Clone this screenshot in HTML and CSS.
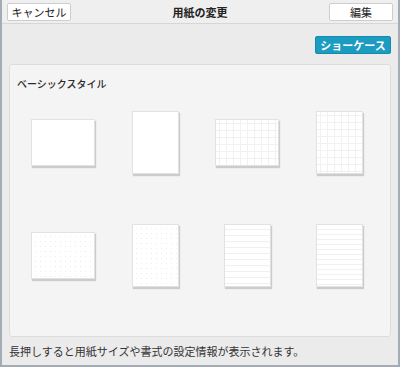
FILE: index.html
```html
<!DOCTYPE html>
<html lang="ja">
<head>
    <meta charset="UTF-8">
    <title>用紙の変更</title>
    <link rel="stylesheet" href="styles.css">
</head>
<body>
    <div class="app">
        <div class="topbar">
            <button class="bar-btn">キャンセル</button>
            <div class="title">用紙の変更</div>
            <button class="bar-btn">編集</button>
        </div>

        <div class="toolbar">
            <button class="showcase-btn">ショーケース</button>
        </div>

        <div class="panel">
            <div class="panel-label">ベーシックスタイル</div>
            <div class="paper-grid">
                <div class="cell"><div class="paper landscape"></div></div>
                <div class="cell"><div class="paper portrait"></div></div>
                <div class="cell"><div class="paper landscape squared"></div></div>
                <div class="cell"><div class="paper portrait squared"></div></div>
                <div class="cell"><div class="paper landscape dotted"></div></div>
                <div class="cell"><div class="paper portrait dotted"></div></div>
                <div class="cell"><div class="paper portrait ruled"></div></div>
                <div class="cell"><div class="paper portrait ruled narrow"></div></div>
            </div>
        </div>

        <div class="hint">長押しすると用紙サイズや書式の設定情報が表示されます。</div>
    </div>
</body>
</html>
```

FILE: styles.css
```css
* {
    margin: 0;
    padding: 0;
    box-sizing: border-box;
}

body {
    font-family: "Noto Sans CJK JP", "Noto Sans", sans-serif;
    background: #ebebeb;
    color: #333;
}

.app {
    width: 400px;
    height: 367px;
    border: 2px solid #a3abb6;
    border-top: none;
    background: #ebebeb;
    display: flex;
    flex-direction: column;
}

.topbar {
    height: 24px;
    flex: none;
    padding: 0 5px;
    border-bottom: 1px solid #d6d6d6;
    background: #efefef;
    display: flex;
    align-items: center;
    justify-content: space-between;
}

.bar-btn {
    width: 64px;
    height: 18px;
    background: #fff;
    border: 1px solid #cdcdcd;
    border-radius: 2px;
    font-family: inherit;
    font-size: 11px;
    font-weight: normal;
    color: #222;
    line-height: 16px;
}

.title {
    font-size: 11px;
    font-weight: bold;
    color: #222;
}

.toolbar {
    flex: none;
    display: flex;
    justify-content: flex-end;
    padding: 12px 7px 0;
}

.showcase-btn {
    width: 76px;
    height: 18px;
    background: #1c9cc1;
    border: 1px solid #178aab;
    border-radius: 2px;
    color: #fff;
    font-family: inherit;
    font-size: 11px;
    font-weight: bold;
    line-height: 16px;
}

.panel {
    flex: 1;
    margin: 10px 7px 0;
    background: #f4f4f4;
    border: 1px solid #dcdcdc;
    border-radius: 3px;
}

.panel-label {
    padding: 12px 7px 0;
    font-size: 10px;
    font-weight: 500;
    line-height: 14px;
    color: #2a2a2a;
}

.paper-grid {
    display: grid;
    grid-template-columns: repeat(4, 92px);
    grid-template-rows: 103px 103px;
    row-gap: 10px;
    padding-left: 7px;
}

.cell {
    display: flex;
    align-items: center;
    justify-content: center;
}

.paper {
    background-color: #fff;
    border: 1px solid #e2e2e2;
    box-shadow: 1px 2px 1px rgba(0, 0, 0, 0.16);
}

.landscape {
    width: 64px;
    height: 47px;
}

.portrait {
    width: 47px;
    height: 63px;
}

.squared {
    background-image:
        linear-gradient(to right, #f1f1f1 1px, transparent 1px),
        linear-gradient(to bottom, #f1f1f1 1px, transparent 1px);
    background-size: 7px 7px;
    background-position: 3px 3px;
}

.dotted {
    background-image: radial-gradient(circle, #ececec 0.6px, transparent 0.9px);
    background-size: 5px 5px;
    background-position: 1px 1px;
}

.ruled {
    background-image: linear-gradient(to bottom, #f0f0f0 1px, transparent 1px);
    background-size: 100% 6px;
    background-position: 0 4px;
}

.ruled.narrow {
    background-size: 100% 5px;
}

.hint {
    flex: none;
    height: 28px;
    padding-left: 7px;
    display: flex;
    align-items: center;
    font-size: 11px;
    color: #333;
}
```
